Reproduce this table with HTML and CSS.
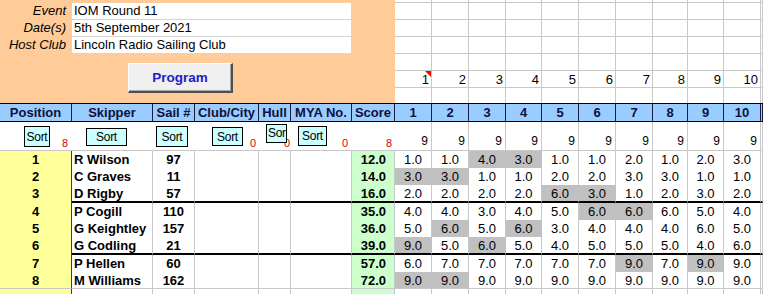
FILE: index.html
```html
<!DOCTYPE html>
<html>
<head>
<meta charset="utf-8">
<link rel="stylesheet" href="styles.css">
</head>
<body>
<div class="sheet">
  <div class="top">
    <div class="panel">
      <div class="info">
        <div class="lbl">Event</div><div class="val sep">IOM Round 11</div>
        <div class="lbl">Date(s)</div><div class="val sep">5th September 2021</div>
        <div class="lbl">Host Club</div><div class="val">Lincoln Radio Sailing Club</div>
      </div>
      <button class="prog">Program</button>
    </div>
    <div class="topgrid">
      <div class="tcol"><div class="tnum note">1</div></div>
      <div class="tcol"><div class="tnum">2</div></div>
      <div class="tcol"><div class="tnum">3</div></div>
      <div class="tcol"><div class="tnum">4</div></div>
      <div class="tcol"><div class="tnum">5</div></div>
      <div class="tcol"><div class="tnum">6</div></div>
      <div class="tcol"><div class="tnum">7</div></div>
      <div class="tcol"><div class="tnum">8</div></div>
      <div class="tcol"><div class="tnum">9</div></div>
      <div class="tcol"><div class="tnum">10</div></div>
      <div class="tcol"></div>
    </div>
  </div>

  <div class="row hdr">
    <div class="c">Position</div><div class="c">Skipper</div><div class="c">Sail #</div><div class="c">Club/City</div><div class="c">Hull</div><div class="c">MYA No.</div><div class="c">Score</div>
    <div class="c">1</div><div class="c">2</div><div class="c">3</div><div class="c">4</div><div class="c">5</div><div class="c">6</div><div class="c">7</div><div class="c">8</div><div class="c">9</div><div class="c">10</div><div class="c"></div>
  </div>

  <div class="row sortrow">
    <div class="sc"><span class="cnt">8</span><button class="sb sb-pos">Sort</button></div>
    <div class="sc"><button class="sb sb-skip">Sort</button></div>
    <div class="sc"><button class="sb sb-sail">Sort</button></div>
    <div class="sc"><span class="cnt cnt3">0</span><button class="sb sb-club">Sort</button></div>
    <div class="sc"><span class="cnt cnt2">0</span><button class="sb sb-hull">Sor</button></div>
    <div class="sc"><span class="cnt">0</span><button class="sb sb-mya">Sort</button></div>
    <div class="sc"><span class="cnt cnt3">8</span></div>
    <div class="c s9">9</div><div class="c s9">9</div><div class="c s9">9</div><div class="c s9">9</div><div class="c s9">9</div><div class="c s9">9</div><div class="c s9">9</div><div class="c s9">9</div><div class="c s9">9</div><div class="c s9">9</div><div class="c"></div>
  </div>

  <div class="row data">
    <div class="c pos">1</div><div class="c skip">R Wilson</div><div class="c sail">97</div><div class="c"></div><div class="c"></div><div class="c"></div><div class="c score">12.0</div>
    <div class="c r">1.0</div><div class="c r">1.0</div><div class="c r hl">4.0</div><div class="c r hl">3.0</div><div class="c r">1.0</div><div class="c r">1.0</div><div class="c r">2.0</div><div class="c r">1.0</div><div class="c r">2.0</div><div class="c r">3.0</div><div class="c"></div>
  </div>
  <div class="row data">
    <div class="c pos">2</div><div class="c skip">C Graves</div><div class="c sail">11</div><div class="c"></div><div class="c"></div><div class="c"></div><div class="c score">14.0</div>
    <div class="c r hl">3.0</div><div class="c r hl">3.0</div><div class="c r">1.0</div><div class="c r">1.0</div><div class="c r">2.0</div><div class="c r">2.0</div><div class="c r">3.0</div><div class="c r">3.0</div><div class="c r">1.0</div><div class="c r">1.0</div><div class="c"></div>
  </div>
  <div class="row data thick">
    <div class="c pos">3</div><div class="c skip">D Rigby</div><div class="c sail">57</div><div class="c"></div><div class="c"></div><div class="c"></div><div class="c score">16.0</div>
    <div class="c r">2.0</div><div class="c r">2.0</div><div class="c r">2.0</div><div class="c r">2.0</div><div class="c r hl">6.0</div><div class="c r hl">3.0</div><div class="c r">1.0</div><div class="c r">2.0</div><div class="c r">3.0</div><div class="c r">2.0</div><div class="c"></div>
  </div>
  <div class="row data">
    <div class="c pos">4</div><div class="c skip">P Cogill</div><div class="c sail">110</div><div class="c"></div><div class="c"></div><div class="c"></div><div class="c score">35.0</div>
    <div class="c r">4.0</div><div class="c r">4.0</div><div class="c r">3.0</div><div class="c r">4.0</div><div class="c r">5.0</div><div class="c r hl">6.0</div><div class="c r hl">6.0</div><div class="c r">6.0</div><div class="c r">5.0</div><div class="c r">4.0</div><div class="c"></div>
  </div>
  <div class="row data">
    <div class="c pos">5</div><div class="c skip">G Keightley</div><div class="c sail">157</div><div class="c"></div><div class="c"></div><div class="c"></div><div class="c score">36.0</div>
    <div class="c r">5.0</div><div class="c r hl">6.0</div><div class="c r">5.0</div><div class="c r hl">6.0</div><div class="c r">3.0</div><div class="c r">4.0</div><div class="c r">4.0</div><div class="c r">4.0</div><div class="c r">6.0</div><div class="c r">5.0</div><div class="c"></div>
  </div>
  <div class="row data thick">
    <div class="c pos">6</div><div class="c skip">G Codling</div><div class="c sail">21</div><div class="c"></div><div class="c"></div><div class="c"></div><div class="c score">39.0</div>
    <div class="c r hl">9.0</div><div class="c r">5.0</div><div class="c r hl">6.0</div><div class="c r">5.0</div><div class="c r">4.0</div><div class="c r">5.0</div><div class="c r">5.0</div><div class="c r">5.0</div><div class="c r">4.0</div><div class="c r">6.0</div><div class="c"></div>
  </div>
  <div class="row data">
    <div class="c pos">7</div><div class="c skip">P Hellen</div><div class="c sail">60</div><div class="c"></div><div class="c"></div><div class="c"></div><div class="c score">57.0</div>
    <div class="c r">6.0</div><div class="c r">7.0</div><div class="c r">7.0</div><div class="c r">7.0</div><div class="c r">7.0</div><div class="c r">7.0</div><div class="c r hl">9.0</div><div class="c r">7.0</div><div class="c r hl">9.0</div><div class="c r">9.0</div><div class="c"></div>
  </div>
  <div class="row data last">
    <div class="c pos">8</div><div class="c skip">M Williams</div><div class="c sail">162</div><div class="c"></div><div class="c"></div><div class="c"></div><div class="c score">72.0</div>
    <div class="c r hl">9.0</div><div class="c r hl">9.0</div><div class="c r">9.0</div><div class="c r">9.0</div><div class="c r">9.0</div><div class="c r">9.0</div><div class="c r">9.0</div><div class="c r">9.0</div><div class="c r">9.0</div><div class="c r">9.0</div><div class="c"></div>
  </div>
  <div class="row data rest">
    <div class="c pos"></div><div class="c"></div><div class="c"></div><div class="c"></div><div class="c"></div><div class="c"></div><div class="c score"></div>
    <div class="c"></div><div class="c"></div><div class="c"></div><div class="c"></div><div class="c"></div><div class="c"></div><div class="c"></div><div class="c"></div><div class="c"></div><div class="c"></div><div class="c"></div>
  </div>
</div>
</body>
</html>
```

FILE: styles.css
```css
:root {
  --cols: 72px 81px 42px 64px 32px 61px 43px 37px 37px 37px 36px 37px 37px 37px 35px 36px 37px 1fr;
  --grid: #c8c8c8;
}
body {
  margin: 0;
  font-family: "Liberation Sans", Arial, sans-serif;
  font-size: 13px;
  color: #000;
  background: #fff;
  overflow: hidden;
}
.sheet { width: 763px; }

/* top area */
.top { display: flex; height: 103px; }
.panel {
  flex: 0 0 395px;
  background: #ffcc99;
  padding-top: 3px;
  box-sizing: border-box;
}
.info {
  display: grid;
  grid-template-columns: 72px 279px;
  grid-template-rows: 17px 17px 16px;
}
.lbl {
  font-style: italic;
  text-align: right;
  padding-right: 6px;
  line-height: 16px;
  white-space: nowrap;
}
.val {
  background: #fff;
  padding-left: 2px;
  line-height: 16px;
  white-space: nowrap;
  box-sizing: border-box;
}
.val.sep { border-bottom: 1px solid #d4d4d4; }
.prog {
  display: block;
  margin: 10px 0 0 128px;
  width: 105px;
  height: 30px;
  padding: 0;
  box-sizing: border-box;
  background: #f0f0f0;
  border-top: 1px solid #ffffff;
  border-left: 1px solid #ffffff;
  border-right: 2px solid #505050;
  border-bottom: 2px solid #505050;
  box-shadow: inset -1px -1px 0 #a8a8a8;
  font-family: "Liberation Sans", Arial, sans-serif;
  font-weight: bold;
  font-size: 13.5px;
  color: #2020c8;
}
.topgrid {
  flex: 1;
  display: grid;
  grid-template-columns: 37px 37px 37px 36px 37px 37px 37px 35px 36px 37px 1fr;
}
.tcol {
  border-right: 1px solid var(--grid);
  box-sizing: border-box;
  background-image: linear-gradient(to bottom, transparent 16px, var(--grid) 16px);
  background-size: 100% 17px;
  background-position: 0 3px;
}
.tnum {
  margin-top: 72px;
  line-height: 15px;
  text-align: right;
  padding-right: 2px;
  position: relative;
}
.note::after {
  content: "";
  position: absolute;
  top: -1px;
  right: 0;
  width: 0;
  height: 0;
  border-top: 6px solid #ff0000;
  border-left: 6px solid transparent;
}

/* rows */
.row {
  display: grid;
  grid-template-columns: var(--cols);
  box-sizing: border-box;
}
.c {
  box-sizing: border-box;
  border-right: 1px solid var(--grid);
  white-space: nowrap;
  overflow: hidden;
}

.hdr {
  height: 19px;
  background: #99ccff;
  border-top: 1px solid #000;
  border-bottom: 1px solid #000;
  font-weight: bold;
  color: #10103a;
}
.hdr .c {
  border-right-color: #1a1a3a;
  text-align: center;
  line-height: 17px;
}

.sortrow {
  height: 29px;
  border-bottom: 1px solid var(--grid);
}
.sc {
  display: grid;
  overflow: hidden;
}
.sc > * { grid-area: 1 / 1; }
.sb {
  align-self: start;
  justify-self: start;
  display: flex;
  align-items: center;
  justify-content: center;
  box-sizing: border-box;
  padding: 0;
  background: #ccffff;
  border: 1px solid #000;
  font-family: "Liberation Sans", Arial, sans-serif;
  font-size: 12px;
  letter-spacing: -0.3px;
  color: #000;
  overflow: hidden;
  white-space: nowrap;
}
.sb-pos { margin: 4px 0 0 24px; width: 26px; height: 21px; }
.sb-skip { margin: 6px 0 0 14px; width: 41px; height: 18px; }
.sb-sail { margin: 4px 0 0 3px; width: 32px; height: 21px; }
.sb-club { margin: 5px 0 0 17px; width: 31px; height: 19px; }
.sb-hull {
  margin: 2px 0 0 7px; width: 21px; height: 19px;
  justify-content: flex-start; align-items: flex-start;
  padding: 1px 0 0 1px;
}
.sb-mya { margin: 4px 0 0 7px; width: 29px; height: 20px; }
.cnt {
  justify-self: end;
  align-self: end;
  color: #e00000;
  font-size: 11px;
  line-height: 11px;
  margin: 0 4px 1px 0;
}
.cnt3 { margin-right: 3px; }
.cnt2 { margin-right: 1px; }
.s9 {
  display: flex;
  justify-content: flex-end;
  align-items: flex-end;
  padding: 0 3px 3px 0;
  font-size: 12px;
  line-height: 12px;
}

.data { height: 17px; }
.data .c {
  line-height: 16px;
  padding-top: 1px;
}
.thick { height: 18px; }
.thick .c:not(.pos) { border-bottom: 2px solid #000; }
.last .c { border-bottom: 1px solid var(--grid); }
.rest { height: 5px; }

.pos {
  background: #ffff99;
  text-align: center;
  font-weight: bold;
  border-right-color: #404040 !important;
}
.skip { font-weight: bold; padding-left: 2px; }
.sail { font-weight: bold; text-align: center; }
.score {
  background: #ccffcc;
  font-weight: bold;
  text-align: right;
  padding-right: 8px;
}
.r { text-align: center; }
.hl { background: #c0c0c0; border-right-color: #c0c0c0; }
```
